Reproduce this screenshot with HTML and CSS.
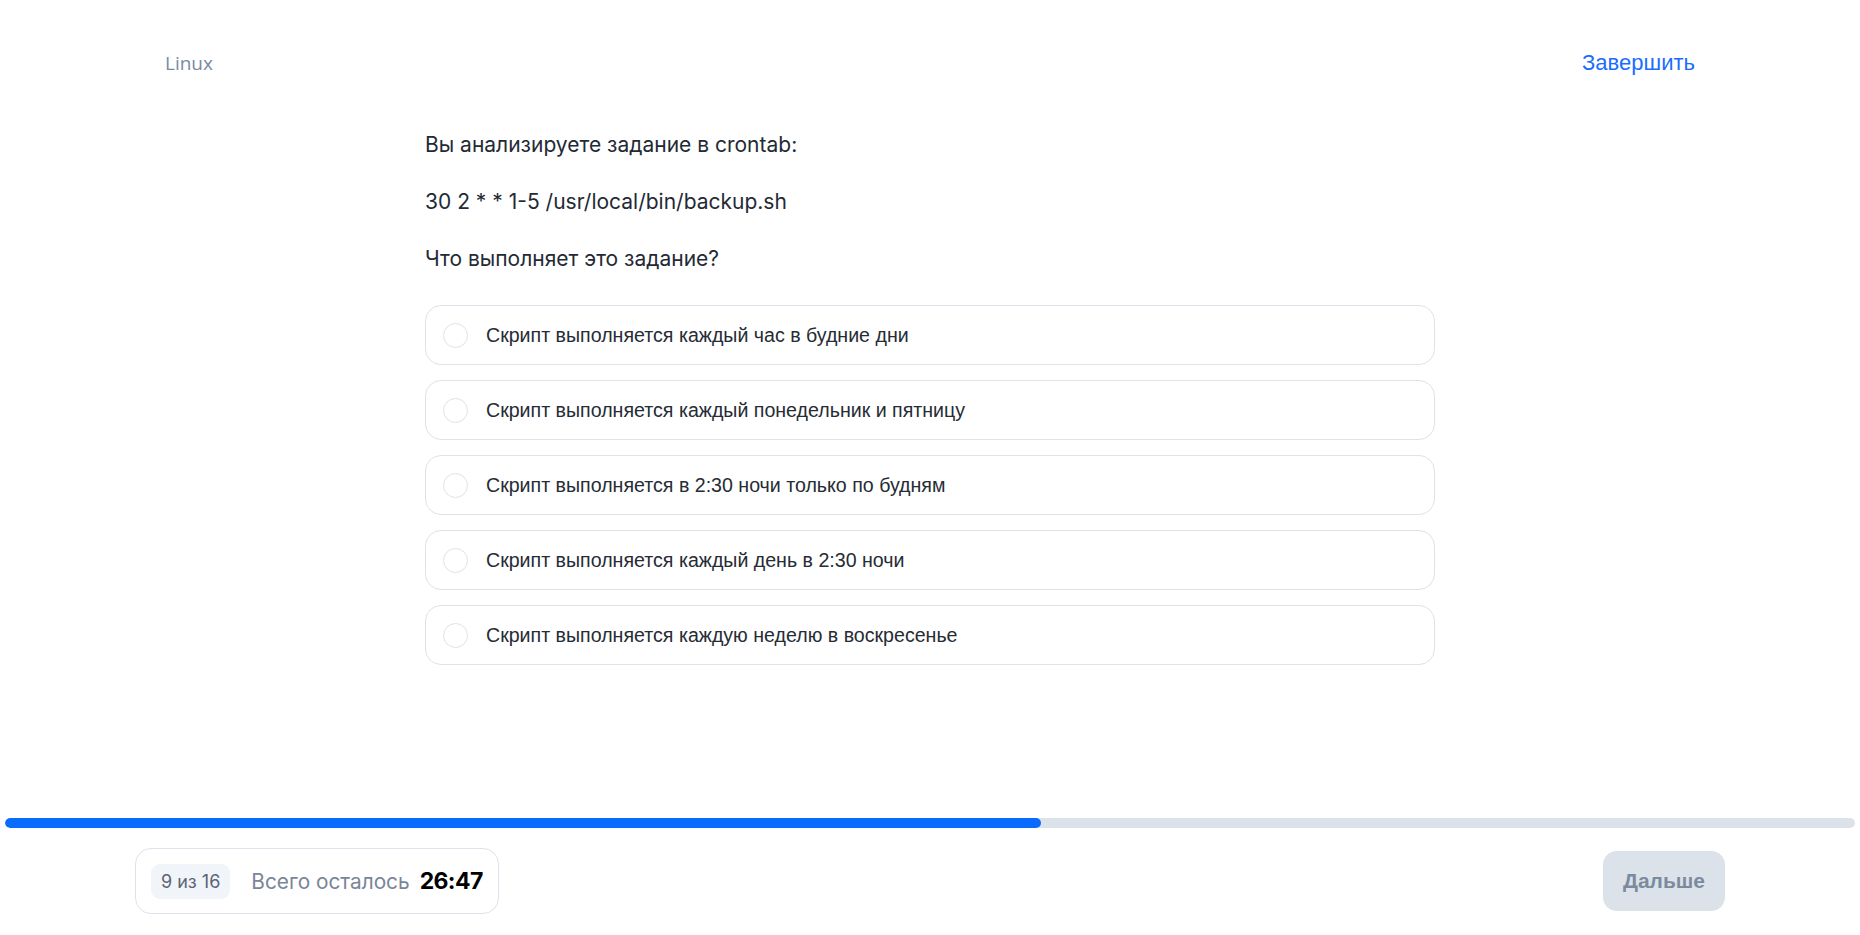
FILE: index.html
```html
<!DOCTYPE html>
<html lang="ru">
<head>
<meta charset="utf-8">
<title>Linux — тест</title>
<link rel="stylesheet" href="styles.css">
</head>
<body>
<div class="page">
  <header class="topbar">
    <span class="topic">Linux</span>
    <a class="finish" href="#">Завершить</a>
  </header>

  <main class="question">
    <div class="prompt">
      <p>Вы анализируете задание в crontab:</p>
      <p>30 2 * * 1-5 /usr/local/bin/backup.sh</p>
      <p>Что выполняет это задание?</p>
    </div>
    <ul class="options">
      <li class="option"><span class="radio"></span><span class="label">Скрипт выполняется каждый час в будние дни</span></li>
      <li class="option"><span class="radio"></span><span class="label">Скрипт выполняется каждый понедельник и пятницу</span></li>
      <li class="option"><span class="radio"></span><span class="label">Скрипт выполняется в 2:30 ночи только по будням</span></li>
      <li class="option"><span class="radio"></span><span class="label">Скрипт выполняется каждый день в 2:30 ночи</span></li>
      <li class="option"><span class="radio"></span><span class="label">Скрипт выполняется каждую неделю в воскресенье</span></li>
    </ul>
  </main>

  <footer class="footer">
    <div class="progress"><div class="progress-fill" style="width: 56%"></div></div>
    <div class="bottombar">
      <div class="status">
        <span class="counter">9 из 16</span>
        <span class="remaining">Всего осталось</span>
        <span class="timer">26:47</span>
      </div>
      <button class="next" type="button">Дальше</button>
    </div>
  </footer>
</div>
</body>
</html>
```

FILE: styles.css
```css
* { box-sizing: border-box; }

html, body {
  margin: 0;
  padding: 0;
  background: #ffffff;
}

body {
  font-family: Inter, "Noto Sans", "Liberation Sans", sans-serif;
  color: #232a35;
}

.page {
  height: 935px;
  display: flex;
  flex-direction: column;
}

.topbar {
  display: flex;
  justify-content: space-between;
  align-items: center;
  padding: 49px 165px 0 165px;
  height: 77px;
}

.topic {
  font-family: "Open Sans", "Noto Sans", sans-serif;
  font-size: 19px;
  line-height: 28px;
  color: #7a8aa1;
}

.finish {
  font-family: "Liberation Sans", Arial, sans-serif;
  font-size: 22px;
  line-height: 28px;
  color: #1a6dff;
  text-decoration: none;
}

.question {
  width: 1010px;
  margin: 53px auto 0 auto;
}

.prompt {
  display: flex;
  flex-direction: column;
  gap: 28px;
}

.prompt p {
  margin: 0;
  font-size: 21px;
  line-height: 29px;
  color: #232a35;
}

.options {
  list-style: none;
  margin: 32px 0 0 0;
  padding: 0;
  display: flex;
  flex-direction: column;
  gap: 15px;
}

.option {
  height: 60px;
  display: flex;
  align-items: center;
  gap: 18px;
  padding: 0 17px;
  border: 1px solid #dde3eb;
  border-radius: 16px;
}

.radio {
  width: 25px;
  height: 25px;
  flex: none;
  border: 1.5px solid #dde3eb;
  border-radius: 50%;
}

.label {
  font-family: "Liberation Sans", Arial, sans-serif;
  font-size: 19.6px;
  line-height: 24px;
  padding-bottom: 1px;
  color: #262c35;
}

.footer {
  margin-top: auto;
  height: 117px;
}

.progress {
  margin: 0 5px;
  height: 10px;
  border-radius: 5px;
  background: #dbe2ea;
  overflow: hidden;
}

.progress-fill {
  height: 100%;
  border-radius: 5px;
  background: #0a6cff;
}

.bottombar {
  display: flex;
  justify-content: space-between;
  align-items: center;
  padding: 20px 135px 0 135px;
}

.status {
  display: flex;
  align-items: center;
  height: 66px;
  padding: 0 15px;
  border: 1px solid #dde3eb;
  border-radius: 16px;
}

.counter {
  height: 35px;
  padding: 0 10px;
  display: flex;
  align-items: center;
  background: #f1f4f8;
  border-radius: 9px;
  font-size: 18px;
  color: #5b6476;
  margin-right: 21px;
}

.remaining {
  font-size: 20.8px;
  color: #7a8597;
  margin-right: 10px;
}

.timer {
  font-size: 23px;
  font-weight: 700;
  letter-spacing: -0.6px;
  color: #000000;
}

.next {
  width: 122px;
  height: 60px;
  border: none;
  border-radius: 14px;
  background: #dbe2ea;
  color: #7b8b9d;
  font-family: "Liberation Sans", Arial, sans-serif;
  font-size: 21px;
  font-weight: 700;
  cursor: pointer;
}
```
